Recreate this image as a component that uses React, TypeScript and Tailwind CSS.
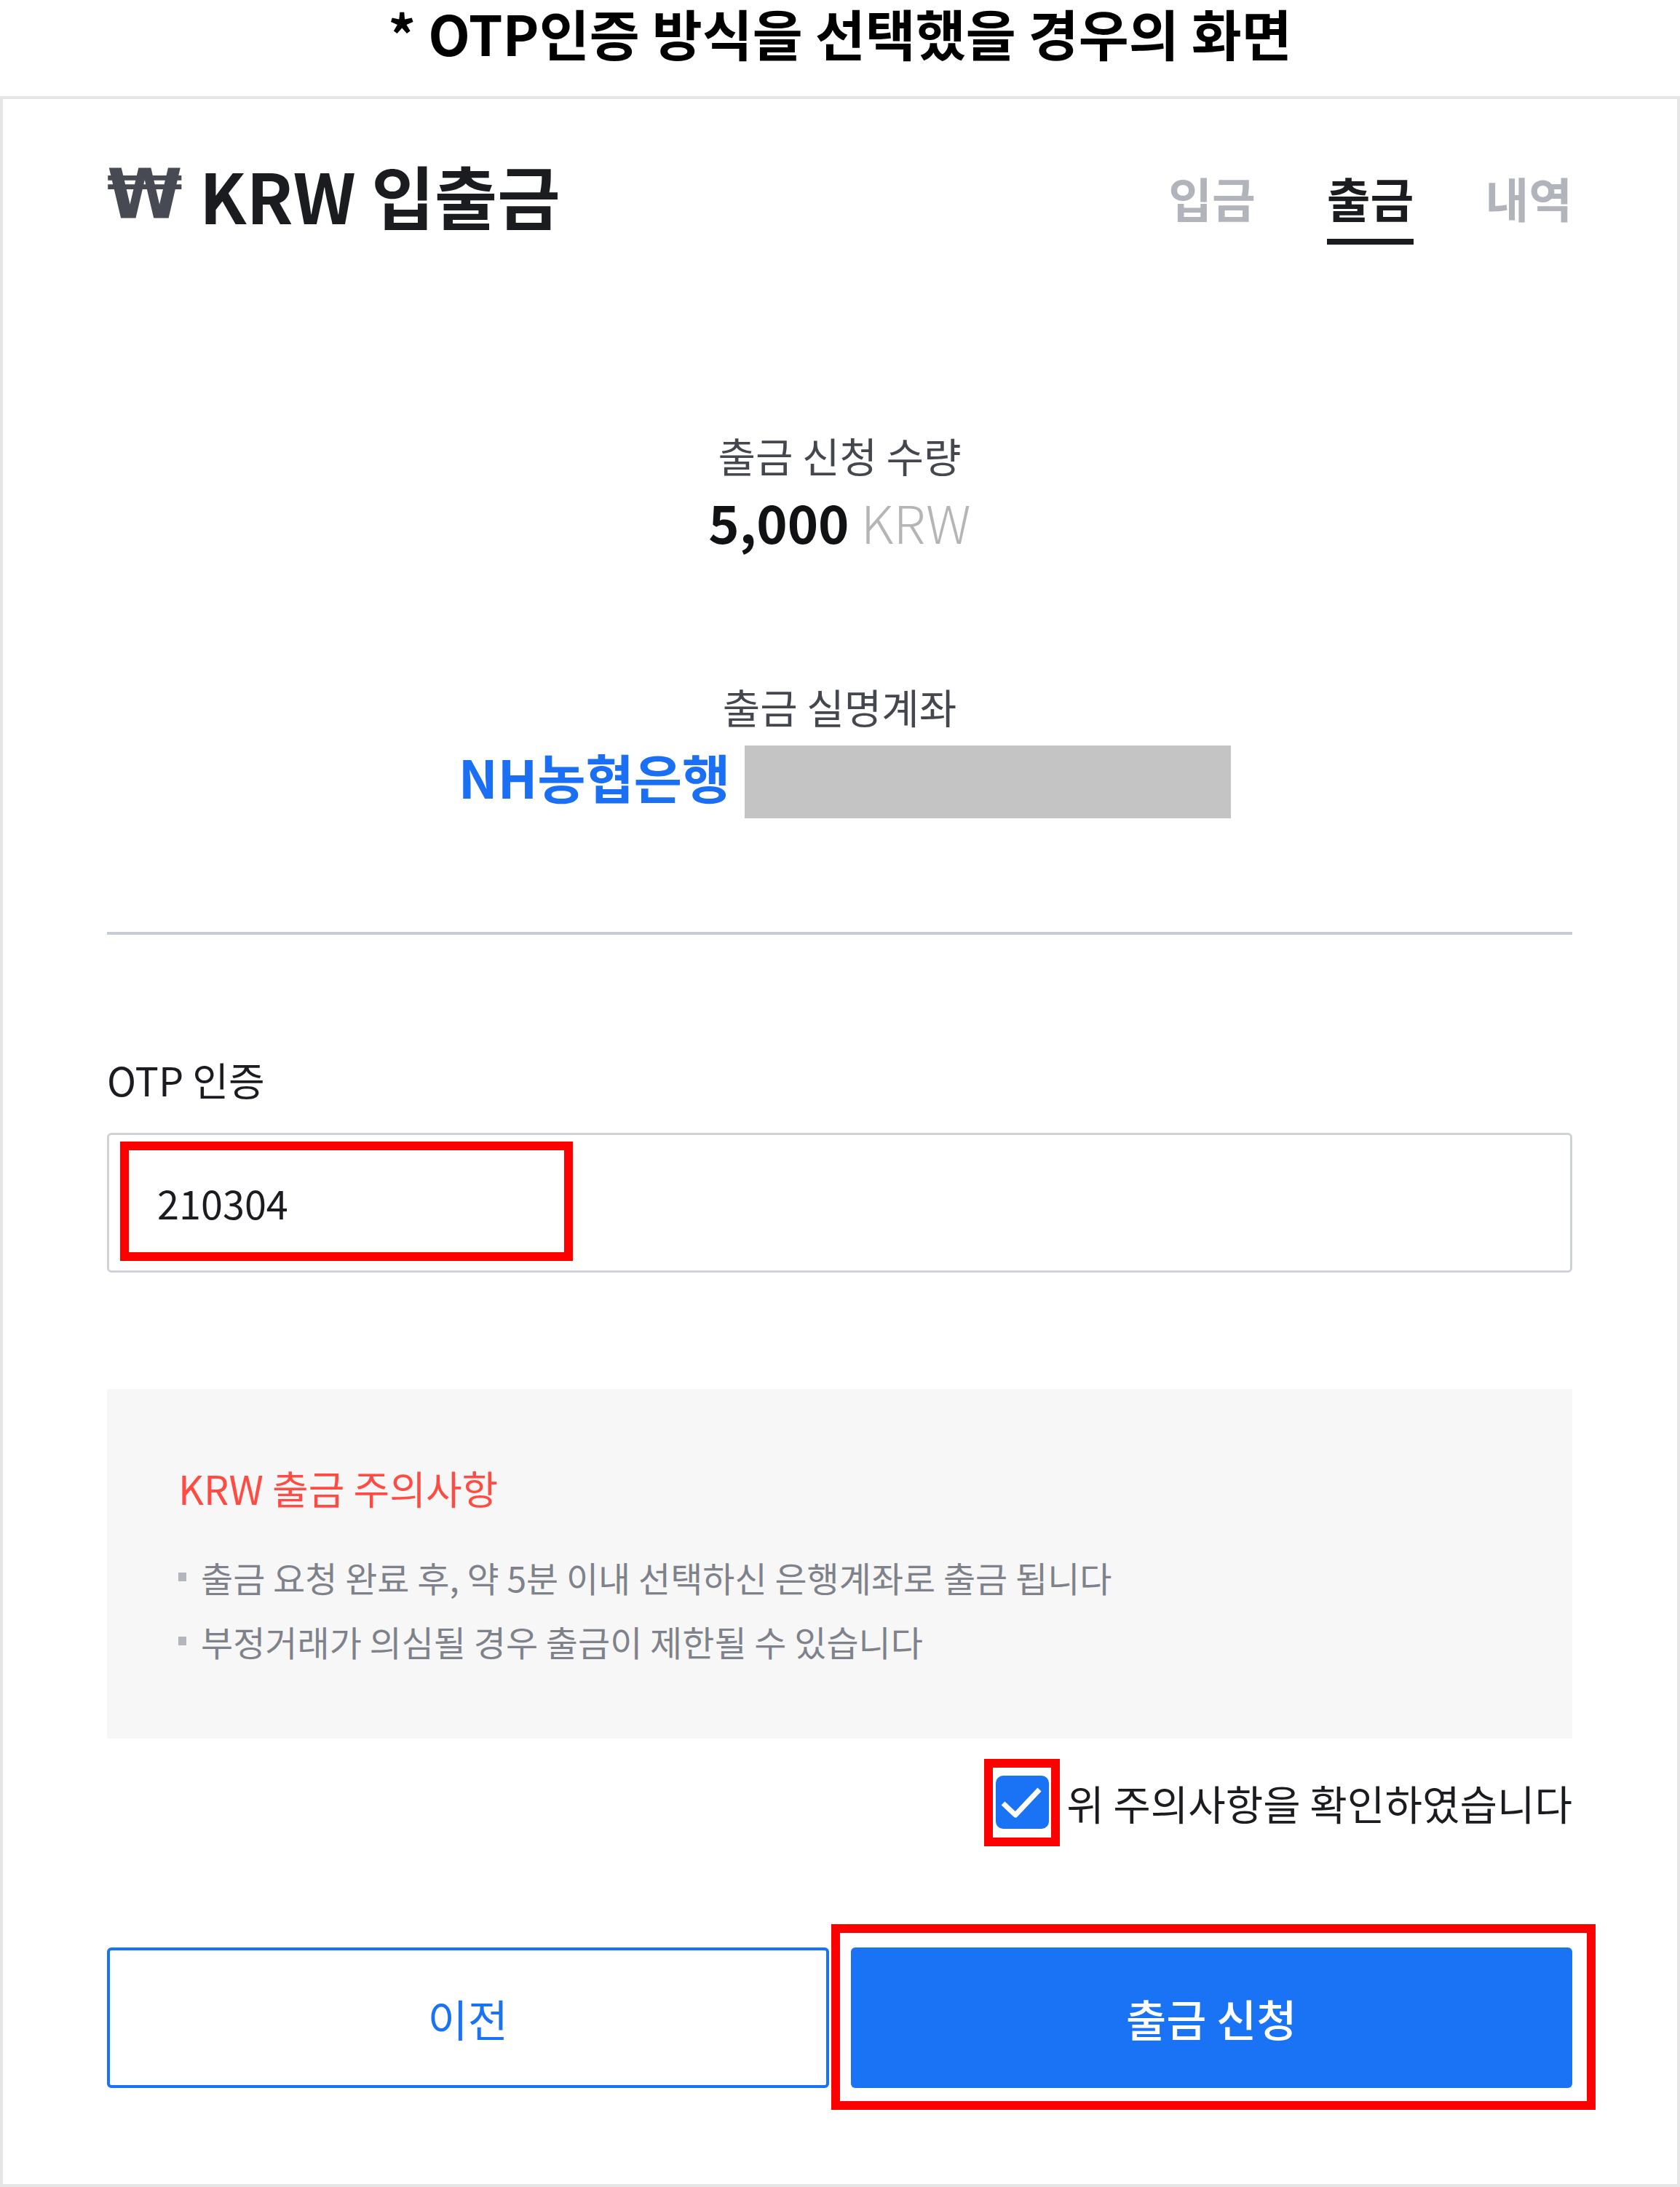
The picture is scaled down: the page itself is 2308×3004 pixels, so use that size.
const notices = [
  '출금 요청 완료 후, 약 5분 이내 선택하신 은행계좌로 출금 됩니다',
  '부정거래가 의심될 경우 출금이 제한될 수 있습니다',
]

const tabs = [
  { label: '입금', active: false },
  { label: '출금', active: true },
  { label: '내역', active: false },
]

export default function App() {
  return (
    <div className="w-[2308px] h-[3004px] bg-white font-['Noto_Sans_CJK_KR','Noto_Sans',sans-serif]">
      {/* Caption */}
      <div className="h-[132px] pt-[4px] text-center">
        <h1 className="text-[75px] leading-[82px] font-bold text-black">
          * OTP인증 방식을 선택했을 경우의 화면
        </h1>
      </div>

      {/* Card */}
      <div className="h-[2872px] border-4 border-[#e6e6e6] pl-[143px] pr-[144px] pt-[76px]">
        {/* Header */}
        <div className="flex items-start justify-between">
          <h2 className="flex text-[94px] leading-[110px] font-bold text-[#1b1c20]">
            <span className="w-[127px] font-['DejaVu_Sans',sans-serif] text-[#474a52]">₩</span>
            <span>KRW 입출금</span>
          </h2>
          <div className="flex gap-[98px] mt-[19px]">
            {tabs.map((tab) => (
              <div
                key={tab.label}
                className={
                  tab.active
                    ? 'text-[65px] leading-[80px] font-bold text-[#1b1c20] pb-[17px] border-b-[8px] border-[#1b1c20]'
                    : 'text-[65px] leading-[80px] font-bold text-[#b1b4bb] pb-[17px] border-b-[8px] border-transparent'
                }
              >
                {tab.label}
              </div>
            ))}
          </div>
        </div>

        {/* Amount */}
        <div className="mt-[254px] flex flex-col items-center">
          <p className="text-[56px] leading-[70px] text-[#45474e]">출금 신청 수량</p>
          <p className="mt-[14px] text-[72px] leading-[84px]">
            <span className="font-semibold text-[#111214]">5,000</span>{' '}
            <span className="font-light text-[#b5b5b5]">KRW</span>
          </p>
        </div>

        {/* Account */}
        <div className="mt-[177px] flex flex-col items-center">
          <p className="text-[56px] leading-[70px] text-[#45474e]">출금 실명계좌</p>
          <div className="mt-[19px] flex items-start gap-[20px] pl-[14px]">
            <span className="text-[72px] leading-[84px] font-bold text-[#1a6ff5]">NH농협은행</span>
            <div className="w-[668px] h-[100px] bg-[#c4c4c4]" />
          </div>
        </div>

        <div className="mt-[156px] h-[4px] bg-[#c9ccd2]" />

        {/* OTP */}
        <p className="mt-[167px] text-[54px] leading-[64px] text-[#1b1c20]">OTP 인증</p>
        <div className="relative mt-[41px] h-[192px] rounded-[6px] border-[3px] border-[#cfd2d7] flex items-center pl-[66px]">
          <span className="text-[54px] leading-[64px] text-[#1b1c20]">210304</span>
          <div className="absolute left-[15px] top-[9px] w-[622px] h-[164px] border-[12px] border-[#ff0000]" />
        </div>

        {/* Notice */}
        <div className="mt-[160px] h-[480px] bg-[#f7f7f7] pl-[98px] pt-[104px]">
          <p className="text-[54px] leading-[64px] text-[#ff4b44]">KRW 출금 주의사항</p>
          <ul className="mt-[46px]">
            {notices.map((n) => (
              <li key={n} className="flex items-center gap-[20px] text-[48px] leading-[88px] text-[#7f828b]">
                <span className="w-[11px] h-[12px] bg-[#b3b6bd]" />
                {n}
              </li>
            ))}
          </ul>
        </div>

        {/* Confirm */}
        <div className="mt-[51px] flex items-center justify-end gap-[24px]">
          <div className="relative">
            <div className="w-[73px] h-[73px] rounded-[10px] bg-[#1a73f5] flex items-center justify-center">
              <svg width="73" height="73" viewBox="0 0 73 73" fill="none">
                <path d="M10 38 L27 54 L60 19" stroke="white" strokeWidth="7" strokeLinejoin="round" />
              </svg>
            </div>
            <div className="absolute -left-[16px] -right-[15px] -top-[23px] -bottom-[24px] border-[12px] border-[#ff0000]" />
          </div>
          <span className="text-[56px] leading-[70px] text-[#1b1c20]">위 주의사항을 확인하였습니다</span>
        </div>

        {/* Buttons */}
        <div className="mt-[163px] grid grid-cols-2 gap-[30px]">
          <button className="h-[193px] rounded-[6px] border-4 border-[#1a73f5] bg-white text-[60px] text-[#1a73f5]">
            이전
          </button>
          <div className="relative">
            <button className="w-full h-[193px] rounded-[6px] bg-[#1a73f5] text-[60px] font-medium text-white">
              출금 신청
            </button>
            <div className="absolute -left-[27px] -right-[32px] -top-[32px] -bottom-[30px] border-[12px] border-[#ff0000]" />
          </div>
        </div>
      </div>
    </div>
  )
}
